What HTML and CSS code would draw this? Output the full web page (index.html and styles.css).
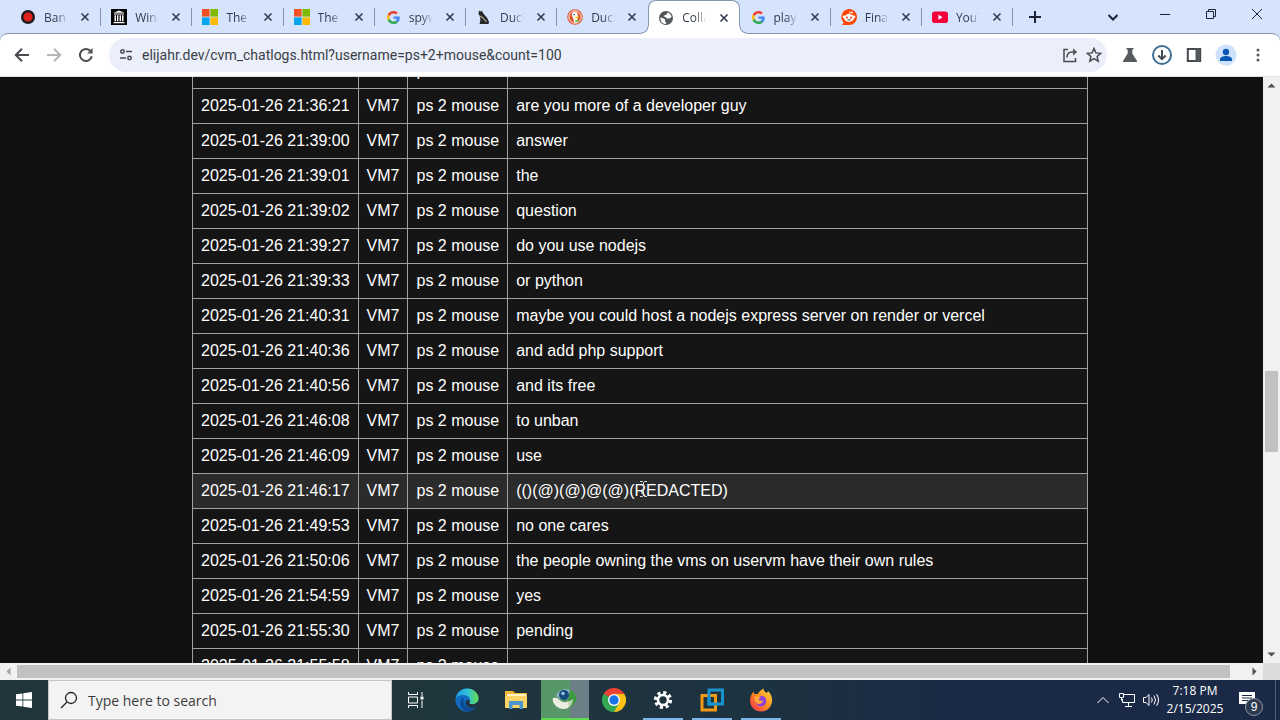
FILE: index.html
```
<!DOCTYPE html>
<html lang="en">
<head>
  <meta charset="UTF-8" />
  <meta name="viewport" content="width=device-width, initial-scale=1.0"/>
  <title>CollabVM chat logs</title>
  <link rel="stylesheet" href="styles.css">
</head>
<body>

<!-- shared icons -->
<svg width="0" height="0" class="defs" aria-hidden="true">
  <symbol id="x" viewBox="0 0 12 12"><path d="M2.500 2.500l7 7M9.500 2.500l-7 7" fill="none" stroke="#333c4c" stroke-width="1.600"/></symbol>
  <symbol id="ms" viewBox="0 0 16 16"><path fill="#f25022" d="M0 0h7.600v7.600H0z"/><path fill="#7fba00" d="M8.400 0H16v7.600H8.400z"/><path fill="#00a4ef" d="M0 8.400h7.600V16H0z"/><path fill="#ffb900" d="M8.400 8.400H16V16H8.400z"/></symbol>
  <symbol id="google" viewBox="0 0 48 48"><path fill="#ea4335" d="M24 9.500c3.500 0 6.700 1.200 9.200 3.600l6.900-6.900C35.900 2.400 30.500 0 24 0 14.600 0 6.500 5.400 2.600 13.200l8 6.200C12.400 13.700 17.700 9.500 24 9.500z"/><path fill="#4285f4" d="M47 24.500c0-1.600-.2-3.100-.4-4.500H24v9h12.900c-.6 3-2.300 5.500-4.800 7.200l7.700 6C44.400 38 47 31.800 47 24.500z"/><path fill="#fbbc05" d="M10.500 28.600a14 14 0 0 1 0-9.200l-8-6.200a24 24 0 0 0 0 21.600z"/><path fill="#34a853" d="M24 48c6.500 0 11.900-2.100 15.900-5.800l-7.700-6c-2.200 1.500-4.900 2.300-8.200 2.300-6.300 0-11.600-4.200-13.500-9.900l-8 6.200C6.500 42.600 14.600 48 24 48z"/></symbol>
</svg>

<header class="tabstrip">
  <nav class="tabs">
    <div class="tab">
      <svg class="favicon" viewBox="0 0 16 16"><circle cx="8" cy="8" r="7" fill="#1c1c22"/><circle cx="8" cy="8" r="4.600" fill="#e0201b"/></svg>
      <a href="#">Bandicam</a><button aria-label="Close tab"><svg><use href="#x"/></svg></button>
    </div>
    <div class="tab">
      <svg class="favicon" viewBox="0 0 16 16"><path d="M0 0h16v16H0z"/><path d="M8 1.500l5.500 2.200H2.500zM3 4.600h10v1H3zM3.500 6.300H5v6H3.500zM6 6.300h1.400v6H6zM8.600 6.300H10v6H8.600zM11 6.300h1.500v6H11zM2.500 13h11v1.200h-11z" fill="#fff"/></svg>
      <a href="#">Windows</a><button aria-label="Close tab"><svg><use href="#x"/></svg></button>
    </div>
    <div class="tab">
      <svg class="favicon"><use href="#ms"/></svg>
      <a href="#">The</a><button aria-label="Close tab"><svg><use href="#x"/></svg></button>
    </div>
    <div class="tab">
      <svg class="favicon"><use href="#ms"/></svg>
      <a href="#">The</a><button aria-label="Close tab"><svg><use href="#x"/></svg></button>
    </div>
    <div class="tab">
      <svg class="favicon google"><use href="#google"/></svg>
      <a href="#">spyware</a><button aria-label="Close tab"><svg><use href="#x"/></svg></button>
    </div>
    <div class="tab">
      <svg class="favicon" viewBox="0 0 16 16"><path d="M3 1.500l1.500 1L6 1.800l.8 2 1.800 2.200 2.800 3.200 1.800 4.300-1 1.500H3.600l.8-4.200-.6-3.800L2.500 5z" fill="#26282a"/><path d="M3.600 7l3 1.600 4 4.200" fill="none" stroke="#a9a38e" stroke-width="1.200"/></svg>
      <a href="#">Ducky</a><button aria-label="Close tab"><svg><use href="#x"/></svg></button>
    </div>
    <div class="tab before-active">
      <svg class="favicon" viewBox="0 0 16 16"><circle cx="8" cy="8" r="7.800" fill="#de5833"/><circle cx="8" cy="8" r="6.200" fill="none" stroke="#fff" stroke-width=".9"/><path d="M5 5c.4-1.900 2-2.600 3.600-2.200 1.800.5 2.300 2.200 2 4.200l-.3 2.400.9 3.600c-1.200.8-2.700 1-4 .5L6 8.500C5 7.300 4.600 6.200 5 5z" fill="#fff"/><circle cx="7" cy="5.700" r=".8" fill="#2d4f8e"/><path d="M8 8l4-.5-.6 1.200L8 9.500z" fill="#fdd20a"/><path d="M8 11.500l3.500-.8v2.300L8.400 13z" fill="#65bc46"/></svg>
      <a href="#">DuckDuck</a><button aria-label="Close tab"><svg><use href="#x"/></svg></button>
    </div>
    <div class="tab active">
      <svg class="favicon" viewBox="0 0 16 16"><circle cx="8" cy="8" r="7" fill="#53565a"/><path d="M2.400 7.500l3.400 1 1.400 1.300-.2 1.600 1.300 1.100-.5 1.600C4.600 14 2.100 11.300 2.400 7.500zM9.500 2.500c2 .5 3.600 2 4.100 4.200L12 8.300l-2.500.4L8 7.500 6.200 6.800l.2-1.600 2.300-.6z" fill="#fff"/></svg>
      <a href="#">CollabVM</a><button aria-label="Close tab"><svg><use href="#x"/></svg></button>
    </div>
    <div class="tab">
      <svg class="favicon google"><use href="#google"/></svg>
      <a href="#">play</a><button aria-label="Close tab"><svg><use href="#x"/></svg></button>
    </div>
    <div class="tab">
      <svg class="favicon" viewBox="0 0 16 16"><path d="M8 0a8 8 0 1 1 0 16H.8l2-2.300A8 8 0 0 1 8 0z" fill="#ff4500"/><circle cx="3" cy="7.800" r="1.400" fill="#fff"/><circle cx="13" cy="7.800" r="1.400" fill="#fff"/><circle cx="11" cy="3.400" r="1" fill="#fff"/><ellipse cx="8" cy="9" rx="5" ry="3.900" fill="#fff"/><circle cx="5.900" cy="8.400" r="1" fill="#f43a10"/><circle cx="10.100" cy="8.400" r="1" fill="#f43a10"/><path d="M5.800 10.600q2.200 1.800 4.400 0z" fill="#222"/><path d="M8 5.200l.7-2.300 2 .5" fill="none" stroke="#fff" stroke-width=".7"/></svg>
      <a href="#">Final</a><button aria-label="Close tab"><svg><use href="#x"/></svg></button>
    </div>
    <div class="tab">
      <svg class="favicon" viewBox="0 0 16 16"><rect y="2.500" width="16" height="11.500" rx="2.800" fill="#f6003b"/><path d="M6.400 5.700v5l4.300-2.500z" fill="#fff"/></svg>
      <a href="#">YouTube</a><button aria-label="Close tab"><svg><use href="#x"/></svg></button>
    </div>
  </nav>
  <button class="new-tab" aria-label="New tab"><svg width="14" height="14" viewBox="0 0 14 14"><path d="M7 1v12M1 7h12"/></svg></button>
  <div class="window-buttons">
    <button class="tab-search" aria-label="Search tabs"><svg width="12" height="12" viewBox="0 0 12 12"><path d="M1.500 4L6 8.500 10.500 4" class="bold"/></svg></button>
    <button aria-label="Minimize"><svg width="12" height="12" viewBox="0 0 12 12"><path d="M1 6.500h10"/></svg></button>
    <button aria-label="Restore"><svg width="12" height="12" viewBox="0 0 12 12"><path d="M1.500 3.500h7v7h-7zM3.500 3.500v-2h7v7h-2"/></svg></button>
    <button aria-label="Close"><svg width="12" height="12" viewBox="0 0 12 12"><path d="M1 1l10 10M11 1L1 11"/></svg></button>
  </div>
</header>

<div class="toolbar">
  <div class="tools">
    <button aria-label="Back"><svg width="16" height="16" viewBox="0 0 16 16"><path d="M15 8H2M8 1.800L1.800 8 8 14.200"/></svg></button>
    <button aria-label="Forward" class="dim"><svg width="16" height="16" viewBox="0 0 16 16"><path d="M1 8h13M8 1.800L14.200 8 8 14.200"/></svg></button>
    <button aria-label="Reload"><svg width="16" height="16" viewBox="0 0 16 16"><path d="M13.800 9.200A6 6 0 1 1 12.600 4.200L14 5.600"/><path d="M14.600 1v5.600H9z" class="solid"/></svg></button>
  </div>
  <div class="omnibox">
    <svg width="14" height="14" viewBox="0 0 14 14"><circle cx="3.500" cy="3.500" r="1.700"/><path d="M7 3.500h6M1 10h6"/><circle cx="10.500" cy="10" r="1.700"/></svg>
    <input type="text" aria-label="Address" value="elijahr.dev/cvm_chatlogs.html?username=ps+2+mouse&amp;count=100">
    <button aria-label="Share"><svg width="16" height="16" viewBox="0 0 16 16"><path d="M6 2.500H2v12h11.500V11M5 10.500c0-3.500 2-5.500 5-5.500h4"/><path d="M11 1.200L15.200 5 11 8.800z" class="solid"/></svg></button>
    <button aria-label="Bookmark"><svg width="16" height="16" viewBox="0 0 16 16"><path d="M8 1.500l1.900 4.400 4.800.4L11.100 9.500l1.100 4.700L8 11.700l-4.200 2.500 1.100-4.700L1.300 6.300l4.800-.4z"/></svg></button>
  </div>
  <div class="tools">
    <button aria-label="Labs"><svg width="16" height="16" viewBox="0 0 16 16"><path d="M4.500 1h7v1.600h-1.200v4L15 14v1H1v-1l4.700-7.400v-4H4.500z" class="solid"/></svg></button>
    <button aria-label="Downloads"><svg width="20" height="20" viewBox="0 0 20 20"><circle cx="10" cy="10" r="9" class="ring"/><path d="M10 5v9M6.300 10.500L10 14.200l3.700-3.700"/></svg></button>
    <button aria-label="Side panel"><svg width="16" height="16" viewBox="0 0 16 16"><path d="M1.800 2h12.400v12H1.800z"/><path d="M9.500 2H14v12H9.500z" class="solid"/></svg></button>
    <button aria-label="Profile"><svg width="22" height="22" viewBox="0 0 22 22"><circle cx="11" cy="11" r="10.500" fill="#cfe2fb" stroke="none"/><g fill="#0b57b5" stroke="none"><circle cx="11" cy="8" r="3.200"/><path d="M5 17v-1.800c0-2.200 3.500-3.200 6-3.200s6 1 6 3.200V17z"/></g></svg></button>
    <button aria-label="Menu"><svg width="4" height="14" viewBox="0 0 4 14"><g class="solid"><circle cx="2" cy="2" r="1.500"/><circle cx="2" cy="7" r="1.500"/><circle cx="2" cy="12" r="1.500"/></g></svg></button>
  </div>
</div>

<main class="view">
  <div class="page">
    <table>
      <tr><td>2025-01-26 21:36:14</td><td>VM7</td><td>ps 2 mouse</td><td>so</td></tr>
      <tr><td>2025-01-26 21:36:21</td><td>VM7</td><td>ps 2 mouse</td><td>are you more of a developer guy</td></tr>
      <tr><td>2025-01-26 21:39:00</td><td>VM7</td><td>ps 2 mouse</td><td>answer</td></tr>
      <tr><td>2025-01-26 21:39:01</td><td>VM7</td><td>ps 2 mouse</td><td>the</td></tr>
      <tr><td>2025-01-26 21:39:02</td><td>VM7</td><td>ps 2 mouse</td><td>question</td></tr>
      <tr><td>2025-01-26 21:39:27</td><td>VM7</td><td>ps 2 mouse</td><td>do you use nodejs</td></tr>
      <tr><td>2025-01-26 21:39:33</td><td>VM7</td><td>ps 2 mouse</td><td>or python</td></tr>
      <tr><td>2025-01-26 21:40:31</td><td>VM7</td><td>ps 2 mouse</td><td>maybe you could host a nodejs express server on render or vercel</td></tr>
      <tr><td>2025-01-26 21:40:36</td><td>VM7</td><td>ps 2 mouse</td><td>and add php support</td></tr>
      <tr><td>2025-01-26 21:40:56</td><td>VM7</td><td>ps 2 mouse</td><td>and its free</td></tr>
      <tr><td>2025-01-26 21:46:08</td><td>VM7</td><td>ps 2 mouse</td><td>to unban</td></tr>
      <tr><td>2025-01-26 21:46:09</td><td>VM7</td><td>ps 2 mouse</td><td>use</td></tr>
      <tr class="hovered"><td>2025-01-26 21:46:17</td><td>VM7</td><td>ps 2 mouse</td><td>(()(@)(@)@(@)(REDACTED)<svg class="cursor" width="9" height="16" viewBox="0 0 9 16"><path d="M1 .5h2.500l1 1 1-1H8M4.500 1.500v13M1 15.500h2.500l1-1 1 1H8"/></svg></td></tr>
      <tr><td>2025-01-26 21:49:53</td><td>VM7</td><td>ps 2 mouse</td><td>no one cares</td></tr>
      <tr><td>2025-01-26 21:50:06</td><td>VM7</td><td>ps 2 mouse</td><td>the people owning the vms on uservm have their own rules</td></tr>
      <tr><td>2025-01-26 21:54:59</td><td>VM7</td><td>ps 2 mouse</td><td>yes</td></tr>
      <tr><td>2025-01-26 21:55:30</td><td>VM7</td><td>ps 2 mouse</td><td>pending</td></tr>
      <tr><td>2025-01-26 21:55:58</td><td>VM7</td><td>ps 2 mouse</td><td></td></tr>
    </table>
  </div>
  <div class="scroll-y">
    <svg viewBox="0 0 17 17"><path d="M4.500 10.500l4-4 4 4z"/></svg>
    <div class="thumb"></div>
    <svg class="last" viewBox="0 0 17 17"><path d="M4.500 6.500l4 4 4-4z"/></svg>
  </div>
  <div class="scroll-x">
    <svg viewBox="0 0 17 17"><path d="M10.500 4.500l-4 4 4 4z" class="off"/></svg>
    <div class="thumb"></div>
    <svg class="last" viewBox="0 0 17 17"><path d="M6.500 4.500l4 4-4 4z"/></svg>
  </div>
  <div class="corner"></div>
</main>

<footer class="taskbar">
  <button class="start" aria-label="Start"><svg width="16" height="16" viewBox="0 0 16 16"><path d="M0 2.300l6.500-.9v6.200H0zM7.300 1.300L16 0v7.600H7.300zM0 8.400h6.500v6.200L0 13.700zM7.300 8.400H16V16l-8.700-1.300z" fill="#fff"/></svg></button>
  <label class="search">
    <svg width="18" height="18" viewBox="0 0 18 18"><circle cx="11" cy="7" r="5.500"/><path d="M7 11l-6 6"/></svg>
    <input type="text" placeholder="Type here to search">
  </label>
  <button class="task-view" aria-label="Task view"><svg width="18" height="18" viewBox="0 0 18 18"><path d="M1.500 1v2.500h9V1M1.500 6h9v6h-9zM1.500 17v-2.500h9V17M15 1v4M15 9.500V17"/><path d="M13.500 5.500h3v3h-3z" fill="#fff" stroke="none"/></svg></button>
  <div class="apps">
    <button aria-label="Edge"><svg width="24" height="24" viewBox="0 0 24 24">
      <defs><linearGradient id="edgeTop" x2="1"><stop stop-color="#1d93dc"/><stop offset=".5" stop-color="#2fc2dd"/><stop offset="1" stop-color="#67dc4c"/></linearGradient></defs>
      <circle cx="12" cy="12" r="11.500" fill="#0f6cc0"/>
      <path d="M.6 11C1.300 4.600 6.200.5 12 .5c6.800 0 11.500 4.700 11.500 9.800 0 3.700-2.600 5.900-5.800 5.900-2.500 0-3.700-.9-3.300-1.800.7-1 .9-1.700.7-2.700C14.500 8.800 12 7 8.700 7 4.800 7 1.600 8.800.6 11z" fill="url(#edgeTop)"/>
      <path d="M9.400 9.500c-2.800 4 .2 11 6.800 10.400 2.300-.2 4-1 5.800-2.200-2 3.600-5.700 5.900-10 5.800C7.700 22.500 5 18.500 5.200 15c.1-2.500 1.800-4.600 4.200-5.500z" fill="#0c4a94"/>
      <path d="M14.400 14.400c-.4.900.8 1.800 3.300 1.800 2 0 3.900-.9 4.900-2.400l1.400 2-2.500 3c-2 1.100-3.500 1.200-5.300 1-3.800-.4-6.400-3.500-5.600-6.100.5-1.500 2-2.200 3.900-1.500.5 1.300.3 1.400-.1 2.200z" fill="#20323c"/></svg></button>
    <button aria-label="File Explorer"><svg width="24" height="24" viewBox="0 0 24 24"><path d="M1 3h8l2 2h12v15H1z" fill="#f2b632"/><path d="M3 6h19v3H3z" fill="#fff3c4"/><path d="M1 8h22v12H1z" fill="#fcd566"/><path d="M5 13h14v8h-3.500v-4h-7v4H5z" fill="#4b94d0"/></svg></button>
    <button aria-label="Globe app" class="current"><svg width="26" height="24" viewBox="0 0 26 24"><path d="M16 3c6 0 9 5 8 10-1 4-4 7-7 7l-1-8z" fill="#3c9a3f"/><path d="M1 11c3-1 5 0 8 3 3 2 6 1 8 0 1 3 1 5-1 7-4 2-9 1-12-2-2-2-4-5-3-8z" fill="#eceee2"/><path d="M4 9C6 4 12 1 18 3l-2 9-8 0z" fill="#8fb0c6"/><circle cx="12" cy="8" r="5" fill="#164a7c"/><circle cx="11" cy="6.500" r="1.800" fill="#9cc0dd"/><path d="M16 15l5-3c0 4-2 7-4 8z" fill="#b9d3b2"/></svg></button>
    <button aria-label="Chrome"><svg width="24" height="24" viewBox="0 0 24 24"><path d="M12 12L1.600 6A12 12 0 0 1 22.400 6z" fill="#ea4335"/><path d="M12 12L22.400 6A12 12 0 0 1 12 24z" fill="#fbc116"/><path d="M12 12v12A12 12 0 0 1 1.600 6z" fill="#34a853"/><path d="M12 6h10.400L17.200 15 12 24l5.200-9z" fill="#fbc116"/><path d="M1.600 6l5.200 9L12 12z" fill="#34a853"/><path d="M6.800 15A6 6 0 0 0 12 18l5.200-3L12 24z" fill="#34a853"/><circle cx="12" cy="12" r="6" fill="#fff"/><circle cx="12" cy="12" r="4.700" fill="#1a73e8"/></svg></button>
    <button aria-label="Settings" class="open"><svg width="20" height="20" viewBox="0 0 20 20"><circle cx="10" cy="10" r="7.500" fill="none" stroke="#fff" stroke-width="3.200" stroke-dasharray="3.140 2.750"/><circle cx="10" cy="10" r="5" fill="none" stroke="#fff" stroke-width="2.600"/></svg></button>
    <button aria-label="VMware" class="open"><svg width="24" height="24" viewBox="0 0 24 24"><g fill="none" stroke-width="3"><path d="M9 2h13.500v14H9z" stroke="#1893d0"/><path d="M2 7.500h13.500V22H2z" stroke="#f59a17"/><path d="M9 6v10h9" stroke="#1893d0"/></g></svg></button>
    <button aria-label="Firefox" class="open"><svg width="24" height="24" viewBox="0 0 24 24">
      <defs><linearGradient id="fox" x1="1" y1="0" x2="0" y2="1"><stop stop-color="#ffe23e"/><stop offset=".5" stop-color="#ff8a1f"/><stop offset="1" stop-color="#f0285a"/></linearGradient></defs>
      <path d="M4.500 3.500c.2 1.200.5 2 1.200 2.700 1-.4 2-.4 3-.1C9.800 4 12 2 14.500.5c0 2 1 3 3 4.500l1.800-1.800c2.600 2.800 4 6 3.800 9.500C22.700 19 18 23.500 12 23.500S1 19 1 12.500c0-3.500 1.500-6.700 3.500-9z" fill="url(#fox)"/><circle cx="12" cy="13" r="5.200" fill="#8a3fe0"/><path d="M5.500 9c2-1.500 5-1.300 7 .6-1.500.2-2.500.8-2.800 2 1 1.200 3 1.400 4.500.4-.3 2.800-2.200 4.300-4.700 4C7 15.600 5 12.500 5.500 9z" fill="#ffa436"/></svg></button>
  </div>
  <div class="tray">
    <button aria-label="Hidden icons"><svg width="14" height="10" viewBox="0 0 14 10"><path d="M1.500 8L7 2.500 12.500 8"/></svg></button>
    <button aria-label="Network"><svg width="18" height="16" viewBox="0 0 18 16"><path d="M6 2.500h10.500v8H4.500V7M10.500 10.500v3.500M7 14.500h7M1.500 1.500h4v4h-4zM3.500 5.500v3"/></svg></button>
    <button aria-label="Volume"><svg width="18" height="16" viewBox="0 0 18 16"><path d="M1.500 5.500H4l3-3v11l-3-3H1.500zM9.500 5.500q1.500 2.500 0 5M12 3.500q3 4.500 0 9M14.500 2q4 6 0 12"/></svg></button>
    <div class="clock"><span>7:18 PM</span><span>2/15/2025</span></div>
    <button class="notify" aria-label="Notifications"><svg width="18" height="16" viewBox="0 0 18 16"><path d="M1 0h16v12h-6l-3 3.500V12H1z" fill="#fff" stroke="none"/><path d="M4 3.500h10M4 6h10M4 8.500h6" stroke="#1c2b42"/></svg><span class="badge">9</span></button>
    <div class="show-desktop"></div>
  </div>
</footer>

</body>
</html>
```

FILE: styles.css
```
* {
  box-sizing: border-box;
}

body {
  margin: 0;
  height: 100vh;
  display: flex;
  flex-direction: column;
  overflow: hidden;
  font-family: "Open Sans", "Segoe UI", sans-serif;
  background: #d6e3fc;
}

button {
  display: flex;
  align-items: center;
  justify-content: center;
  padding: 0;
  border: 0;
  background: none;
}

svg {
  display: block;
  flex: none;
}

.defs {
  position: absolute;
}

/* tab strip */
.tabstrip {
  display: flex;
  height: 33px;
  flex: none;
  padding-left: 10px;
}

.tabs {
  display: flex;
  flex: 0 1 1003px;
  min-width: 0;
}

.tab {
  flex: 1 1 0;
  min-width: 0;
  height: 34px;
  display: flex;
  align-items: center;
  padding: 0 10px;
  background: linear-gradient(#7f92b4, #7f92b4) right center / 1px 18px no-repeat;
}

.tab.before-active {
  background: none;
}

/* sits over the toolbar's top line */
.tab.active {
  position: relative;
  z-index: 1;
  background: #fff;
  border: 1px solid #8796b0;
  border-bottom: 0;
  border-radius: 8px 8px 0 0;
  padding: 0 9px;
}

.tab.active::before,
.tab.active::after {
  content: "";
  position: absolute;
  bottom: 0;
  width: 8px;
  height: 8px;
}

.tab.active::before {
  left: -8px;
  background: radial-gradient(circle at 0 0, #d6e3fc 6px, #8796b0 7px, #fff 8px);
}

.tab.active::after {
  right: -8px;
  background: radial-gradient(circle at 100% 0, #d6e3fc 6px, #8796b0 7px, #fff 8px);
}

.favicon {
  width: 16px;
  height: 16px;
}

.favicon.google {
  width: 13px;
  height: 13px;
  margin: 0 1px 0 2px;
}

.tab a {
  flex: 1;
  margin: 0 10px 0 8px;
  overflow: hidden;
  white-space: nowrap;
  font-size: 12px;
  color: #333c4c;
  text-decoration: none;
  -webkit-mask-image: linear-gradient(90deg, #000 50%, transparent 95%);
  mask-image: linear-gradient(90deg, #000 50%, transparent 95%);
}

.tab button,
.tab button svg {
  width: 12px;
  height: 12px;
}

.new-tab,
.window-buttons button {
  height: 34px;
}

.new-tab {
  width: 44px;
}

.new-tab path,
.window-buttons path {
  fill: none;
  stroke: #1c2433;
}

.new-tab path,
.window-buttons .bold {
  stroke-width: 2;
}

.window-buttons {
  display: flex;
  margin-left: auto;
}

.window-buttons button {
  width: 46px;
  height: 28px;
}

.window-buttons .tab-search {
  width: 58px;
  height: 34px;
}

/* toolbar */
.toolbar {
  display: flex;
  align-items: center;
  gap: 7px;
  height: 44px;
  flex: none;
  padding: 0 6px;
  background: #fff;
  border-top: 1px solid #8796b0;
  border-bottom: 1px solid #dde1e8;
  border-radius: 8px 8px 0 0;
}

.toolbar svg {
  fill: none;
  stroke: #474a4f;
  stroke-width: 2;
}

.toolbar .solid {
  fill: #55585c;
  stroke: none;
}

.toolbar .ring {
  stroke: #3f6e94;
}

.toolbar .dim svg {
  stroke: #b4b6b9;
}

.tools {
  display: flex;
}

.tools button {
  width: 32px;
  height: 32px;
}

.omnibox {
  flex: 1;
  display: flex;
  align-items: center;
  height: 34px;
  padding: 0 1px 0 10px;
  border-radius: 17px;
  background: #ebeffa;
}

.omnibox .solid {
  stroke-width: 0;
}

.omnibox svg {
  stroke-width: 1.5;
}

.omnibox input {
  flex: 1;
  min-width: 0;
  margin-left: 9px;
  padding: 0;
  border: 0;
  outline: 0;
  background: none;
  font: 14px Roboto, "Segoe UI", sans-serif;
  color: #3a3e47;
}

.omnibox button {
  width: 24px;
  height: 24px;
}

/* page and its scrollbars */
.view {
  flex: 1;
  min-height: 0;
  display: grid;
  grid-template-columns: minmax(0, 1fr) 17px;
  grid-template-rows: minmax(0, 1fr) 17px;
}

.page {
  overflow: hidden;
  background: #111;
  color: #fff;
  font-family: "Liberation Sans", Arial, sans-serif;
  font-size: 16px;
}

table {
  width: 70vw;
  margin: -24px 0 0 15vw;
  border-collapse: collapse;
  background: #151515;
}

td {
  width: 1px;
  padding: 8px;
  border: 1px solid #a0a0a0;
  line-height: 18px;
  white-space: nowrap;
}

td:last-child {
  width: auto;
  position: relative;
}

.hovered {
  background: #2b2b2b;
}

.cursor {
  position: absolute;
  left: 131px;
  top: 7px;
  fill: none;
  stroke: #ddd;
}

.scroll-y,
.scroll-x {
  display: grid;
  background: #f1f1f1;
}

.scroll-y {
  grid-template-rows: 17px 277fr 81fr 194fr 17px;
}

.scroll-x {
  grid-template-columns: 17px 1213fr 16fr 17px;
}

.scroll-y .thumb {
  grid-row: 3;
  margin: 0 2px;
}

.scroll-x .thumb {
  margin: 2px 0;
}

.thumb {
  background: #c1c1c1;
}

.scroll-y .last {
  grid-row: 5;
}

.scroll-x .last {
  grid-column: 4;
}

.scroll-y path,
.scroll-x path {
  fill: #505050;
}

.scroll-x .off {
  fill: #a3a3a3;
}

.corner {
  background: #dcdcdc;
}

/* taskbar */
.taskbar {
  display: flex;
  height: 40px;
  flex: none;
  background: linear-gradient(90deg, #20363c 30%, #1d3240 60%, #1a2945 75%);
}

.start,
.task-view {
  width: 48px;
}

.task-view svg,
.tray svg {
  fill: none;
  stroke: #fff;
}

.search {
  display: flex;
  align-items: center;
  width: 344px;
  padding-left: 11px;
  background: #f3f3f3;
  border: 1px solid #c4c4c4;
}

.search svg {
  fill: none;
  stroke: #222;
  stroke-width: 1.3;
}

.search input {
  flex: 1;
  min-width: 0;
  margin-left: 10px;
  padding: 0;
  border: 0;
  outline: 0;
  background: none;
  font: 14px "Open Sans", "Segoe UI", sans-serif;
}

.search input::placeholder {
  color: #3c3c3c;
}

.apps {
  display: flex;
  gap: 1px;
  margin-left: 3px;
}

.apps button {
  width: 48px;
}

.apps .open {
  background: linear-gradient(#7fb6ea, #7fb6ea) center bottom / 40px 2px no-repeat;
}

.apps .current {
  background: linear-gradient(90deg, #57976a 60%, #6d8088 60%);
  border-bottom: 2px solid #5ddc4d;
}

.tray {
  display: flex;
  margin-left: auto;
  color: #fff;
}

.tray button {
  width: 24px;
}

.clock {
  display: flex;
  flex-direction: column;
  justify-content: center;
  width: 64px;
  text-align: center;
  font-size: 12px;
  line-height: 18px;
}

.tray .notify {
  position: relative;
  width: 40px;
}

.badge {
  position: absolute;
  left: 18px;
  top: 18px;
  width: 18px;
  height: 18px;
  border: 1px solid #8b94a2;
  border-radius: 50%;
  background: #2a3950;
  color: #fff;
  font-size: 12px;
  line-height: 16px;
  text-align: center;
}

.show-desktop {
  width: 5px;
  margin-left: 8px;
  border-left: 1px solid #566179;
}
```
